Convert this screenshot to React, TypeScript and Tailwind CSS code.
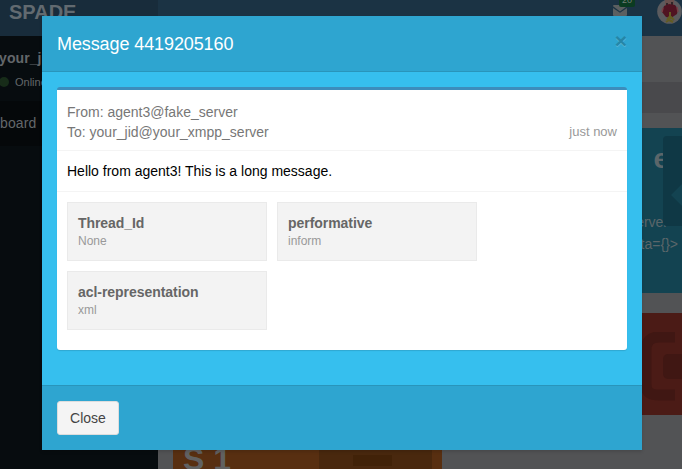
import React from "react";

const attributes = [
  { name: "Thread_Id", value: "None", spacing: "tracking-[-0.08px]" },
  { name: "performative", value: "inform", spacing: "tracking-[-0.05px]" },
  { name: "acl-representation", value: "xml", spacing: "tracking-[-0.05px]" },
];

function Header() {
  return (
    <header className="flex h-9 shrink-0 bg-[#1b3344]">
      <div className="w-[158px] bg-[#182c3b] pl-[9px] text-[20px] leading-6 font-bold text-[#626a70]">SPADE</div>
      <div className="relative flex flex-1 justify-end">
        <svg className="mt-[5px] h-[11px] w-[14px]" viewBox="0 0 14 11">
          <path d="M1 0h12q1 0 1 1.3L7 6.5 0 1.3Q0 0 1 0Z" fill="#5b5f60" />
          <path d="M0 3l7 4.7L14 3v7q0 1-1 1H1q-1 0-1-1Z" fill="#5b5f60" />
        </svg>
        <span className="absolute top-[-6px] right-[47px] h-[13px] w-4 rounded-[2px] bg-[#0b3b21] text-center text-[9px] leading-[13px] text-[#717c75]">20</span>
        <svg className="mt-[-1px] mr-[-1px] ml-[30px] h-[25px] w-[26px]" viewBox="0 0 26 25">
          <circle cx="12.5" cy="12.5" r="12.3" fill="#5b5b5e" />
          <path d="M8 1h9v6H8Z" fill="#69504d" />
          <path d="M9 4h2v3H9M14 3h2v3h-2" fill="#302629" />
          <path d="M7 7l5-2 6 1 3 4-1 5-6 4-5-1-4-5Z" fill="#501321" />
          <path d="M6 9l-1 4M20 8l1 5" stroke="#764047" strokeWidth="1.5" />
          <path d="M13 13v7M10 21l3-4 4 4M9 23l3-2 4 2" fill="none" stroke="#635c22" strokeWidth="2" />
        </svg>
      </div>
    </header>
  );
}

function Sidebar() {
  return (
    <aside className="w-[158px] shrink-0 bg-[#070c0f] text-[#63676a]">
      <div className="h-[65px] pt-3">
        <div className="ml-[-1px] text-[14px] leading-5 font-semibold tracking-[0.1px]">your_jid</div>
        <div className="flex items-center pt-[6px] text-[11px] leading-4">
          <span className="mr-[6px] ml-[-1px] h-[10px] w-[10px] rounded-full bg-[#172c19]" />
          Online
        </div>
      </div>
      <div className="ml-[-33px] h-[45px] bg-[#05080a] pt-[12px] text-[14px] leading-5 tracking-[0.1px]">Dashboard</div>
    </aside>
  );
}

function Dashboard() {
  return (
    <main className="flex min-w-0 flex-1 flex-col bg-[#525355]">
      <div className="mt-[46px] ml-[15px] h-[31px] shrink-0 bg-[#49494c]" />
      <div className="mt-[15px] ml-[15px] flex h-[165px] shrink-0 bg-[#134351] text-[#5b666a]">
        <div className="flex w-[496px] flex-col items-end pt-[15px]">
          <div className="w-[34px] text-right text-[28px] leading-8 font-bold">e</div>
          <div className="mt-9 mr-[-4px] text-[14px] leading-[22px] whitespace-nowrap">server"</div>
          <div className="mr-[-9px] text-[14px] leading-[22px] whitespace-nowrap">data={"{}"}&gt;</div>
        </div>
        <svg className="mt-2 ml-[-6px] h-[90px] w-[19px] overflow-visible" viewBox="0 0 19 90">
          <rect width="60" height="90" rx="4" fill="#0f3845" />
          <path d="M8 59 19 48v22Z" fill="#134351" />
        </svg>
      </div>
      <div className="mt-5 ml-[365px] flex h-[102px] shrink-0 justify-end bg-[#4b1b16]">
        <svg className="mt-[19px] h-[70px] w-[41px]" viewBox="0 0 41 70">
          <path d="M34 5H18C9 5 5 10 5 18v34c0 8 4 11 13 11h16" fill="none" stroke="#401713" strokeWidth="11" strokeLinejoin="round" />
          <rect x="22" y="22" width="25" height="25" rx="5" fill="#401713" />
        </svg>
      </div>
      <div className="mt-[13px] ml-[15px] flex h-[41px] w-[269px] shrink-0 overflow-hidden bg-[#582f11]">
        <span className="w-[146px] pt-[15px] pl-[10px] text-[32px] leading-8 font-bold text-[#616161]">S 1</span>
        <div className="flex h-full w-[113px] bg-[#49280e] pt-[27px] pl-[34px]">
          <div className="h-[11px] w-[39px] bg-[#412208]" />
          <div className="mt-[-27px] ml-[6px] h-full w-0" />
        </div>
      </div>
    </main>
  );
}

function MessageModal() {
  return (
    <section className="absolute top-4 left-[42px] flex h-[434px] w-[600px] flex-col bg-[#36bfee] shadow-[0_2px_3px_rgba(0,0,0,0.13)]">
      <div className="flex h-14 shrink-0 justify-between border-b border-[#2995bb] bg-[#2ea5d0] px-[15px] text-white">
        <h1 className="pt-[18px] text-[18px] leading-5 font-normal tracking-[-0.1px]">Message 4419205160</h1>
        <button aria-label="Dismiss" className="mt-[14px] h-[21px] text-[21px] leading-[21px] font-bold text-[#2586a7] [text-shadow:0_1px_0_#58b7d9]">×</button>
      </div>
      <div className="h-[313px] px-[15px] pt-[15px]">
        <div className="h-[263px] rounded-[3px] border-t-[3px] border-[#3c8dbc] bg-white shadow-[0_1px_1px_rgba(0,0,0,0.12)]">
          <div className="flex h-[61px] items-end justify-between border-b border-[#f4f4f4] px-[10px] pb-2 text-[14px] leading-5 text-[#777]">
            <div>
              <p>From: agent3@fake_server</p>
              <p>To: your_jid@your_xmpp_server</p>
            </div>
            <span className="text-[13px] text-[#999]">just now</span>
          </div>
          <p className="h-[41px] border-b border-[#f4f4f4] px-[10px] pt-[10px] text-[14px] leading-5 text-black">Hello from agent3! This is a long message.</p>
          <div className="flex flex-wrap gap-[10px] px-[10px] pt-[10px]">
            {attributes.map((attribute) => (
              <div key={attribute.name} className="h-[59px] w-[200px] border border-[#eaeaea] bg-[#f3f3f3] px-[10px] pt-[10px]">
                <h2 className={`text-[14px] leading-5 font-bold text-[#666] ${attribute.spacing}`}>{attribute.name}</h2>
                <p className="text-[12px] leading-[17px] text-[#999]">{attribute.value}</p>
              </div>
            ))}
          </div>
        </div>
      </div>
      <div className="h-[65px] border-t border-[#2995bb] bg-[#2ea5d0] px-[15px] pt-[15px]">
        <button className="h-[34px] w-[62px] rounded-[3px] border border-[#ddd] bg-[#f4f4f4] text-[14px] leading-5 text-[#444]">Close</button>
      </div>
    </section>
  );
}

export default function App() {
  return (
    <div className="relative flex h-[469px] w-[682px] flex-col overflow-hidden font-['Liberation_Sans',Arial,sans-serif]">
      <Header />
      <div className="flex min-h-0 flex-1"><Sidebar /><Dashboard /></div>
      <MessageModal />
    </div>
  );
}
